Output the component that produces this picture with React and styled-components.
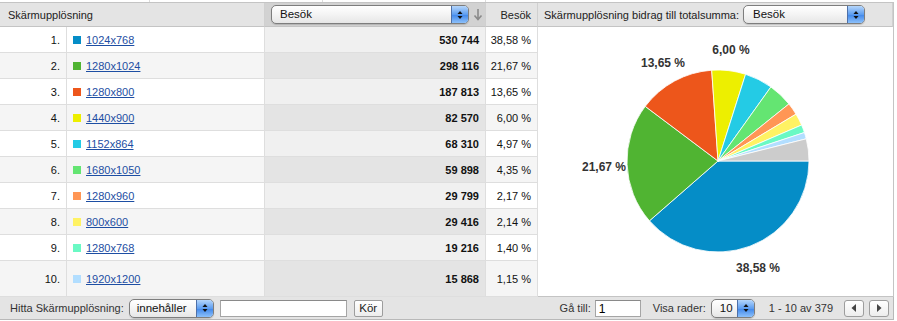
import React from "react"
import styled, { createGlobalStyle } from "styled-components"

const GlobalStyle = createGlobalStyle`
  body {
    margin: 0;
    background: #fff;
    font-family: "Liberation Sans", Arial, sans-serif;
    font-size: 11px;
    color: #222;
  }
`

const rows = [
  { res: "1024x768", visits: "530 744", pct: "38,58 %", color: "#058dc7" },
  { res: "1280x1024", visits: "298 116", pct: "21,67 %", color: "#50b432" },
  { res: "1280x800", visits: "187 813", pct: "13,65 %", color: "#ed561b" },
  { res: "1440x900", visits: "82 570", pct: "6,00 %", color: "#edef00" },
  { res: "1152x864", visits: "68 310", pct: "4,97 %", color: "#24cbe5" },
  { res: "1680x1050", visits: "59 898", pct: "4,35 %", color: "#64e572" },
  { res: "1280x960", visits: "29 799", pct: "2,17 %", color: "#ff9655" },
  { res: "800x600", visits: "29 416", pct: "2,14 %", color: "#fff263" },
  { res: "1280x768", visits: "19 216", pct: "1,40 %", color: "#6af9c4" },
  { res: "1920x1200", visits: "15 868", pct: "1,15 %", color: "#b2deff" },
]

const shares = [38.58, 21.67, 13.65, 6.0, 4.97, 4.35, 2.17, 2.14, 1.4, 1.15]

const Page = styled.div`
  width: 894px;
`

const TopStrip = styled.div`
  height: 2px;
  display: grid;
  grid-template-columns: 150px 173px 163px 1fr;
  border-bottom: 1px solid #c4c4c4;
`

const StripCell = styled.div`
  border-right: 1px solid #dcdcdc;
  &:last-child {
    border-right: none;
  }
`

const Grid = styled.div`
  display: grid;
  grid-template-columns: 67px 198px 221px 52px 1fr;
  grid-template-rows: 24px repeat(9, 26px) 36px;
  border-right: 1px solid #c4c4c4;
`

const HeadCell = styled.div`
  grid-column: span ${(p) => p.$span || 1};
  display: flex;
  align-items: center;
  justify-content: ${(p) => p.$justify || "flex-start"};
  gap: 4px;
  padding: 0 ${(p) => p.$pr || 8}px 0 ${(p) => p.$pl || 8}px;
  background: ${(p) => (p.$sorted ? "#d2d2d2" : "#e4e4e4")};
  border-bottom: 1px solid #c4c4c4;
  border-right: 1px solid #d0d0d0;
  color: #222;
  white-space: nowrap;
  &:last-child {
    border-right: none;
  }
`

const Cell = styled.div`
  display: flex;
  align-items: center;
  justify-content: ${(p) => (p.$right ? "flex-end" : "flex-start")};
  gap: 5px;
  padding: 0 6px;
  background: ${(p) => p.$bg};
  border-bottom: 1px solid #dedede;
  border-right: 1px solid #dedede;
  font-weight: ${(p) => (p.$bold ? "bold" : "normal")};
  color: #111;
  white-space: nowrap;
`

const Swatch = styled.span`
  width: 8px;
  height: 8px;
  background: ${(p) => p.$color};
  flex: none;
`

const ResLink = styled.a`
  color: #1d4ea3;
  text-decoration: underline;
  cursor: pointer;
`

const ChartPanel = styled.div`
  grid-column: 5;
  grid-row: 2 / span 10;
  background: #fff;
  border-bottom: 1px solid #c4c4c4;
`

const SelectBox = styled.div`
  width: ${(p) => p.$w}px;
  height: 19px;
  box-sizing: border-box;
  display: flex;
  border: 1px solid #7d7d7d;
  border-radius: 5px;
  background: linear-gradient(#ffffff, #f4f4f4 50%, #e6e6e6);
  box-shadow: 0 1px 1px rgba(0, 0, 0, 0.15);
  overflow: hidden;
  font-size: 11.5px;
  color: #111;
  flex: none;
`

const SelectValue = styled.span`
  flex: 1;
  padding-left: ${(p) => p.$pl || 8}px;
  line-height: 17px;
  white-space: nowrap;
`

const Stepper = styled.span`
  width: 16px;
  display: flex;
  align-items: center;
  justify-content: center;
  background: linear-gradient(#b5d6fb, #5d9df0 50%, #3f86ea 51%, #8cc0fa);
  border-left: 1px solid #4e70a8;
`

const SortArrow = styled.svg`
  flex: none;
`

const Footer = styled.div`
  height: 22px;
  display: flex;
  align-items: center;
  justify-content: space-between;
  padding: 0 4px 0 10px;
  background: #e4e4e4;
  border-bottom: 1px solid #b8b8b8;
  border-right: 1px solid #b8b8b8;
  color: #333;
  font-size: 11px;
  white-space: nowrap;
`

const Group = styled.div`
  display: flex;
  align-items: center;
  flex: none;
  gap: ${(p) => (p.$gap === undefined ? 5 : p.$gap)}px;
  margin-left: ${(p) => p.$ml || 0}px;
`

const TextInput = styled.div`
  width: ${(p) => p.$w}px;
  height: 17px;
  box-sizing: border-box;
  background: #fff;
  border: 1px solid #a5a5a5;
  border-top-color: #8a8a8a;
  padding-left: 3px;
  line-height: 16px;
  font-size: 12px;
  color: #000;
`

const Button = styled.div`
  height: 17px;
  min-width: ${(p) => p.$w}px;
  box-sizing: border-box;
  display: flex;
  align-items: center;
  justify-content: center;
  border: 1px solid #9d9d9d;
  border-radius: ${(p) => p.$r || 2}px;
  background: linear-gradient(#ffffff, #ededed);
  font-size: 11.5px;
  color: #222;
`

function StepperArrows() {
  return (
    <Stepper>
      <svg width="6" height="10" viewBox="0 0 6 10">
        <path d="M3 1 L5.5 4 L0.5 4 Z" fill="#111" />
        <path d="M3 9 L5.5 6 L0.5 6 Z" fill="#111" />
      </svg>
    </Stepper>
  )
}

function Select({ width, value, pl }) {
  return (
    <SelectBox $w={width}>
      <SelectValue $pl={pl}>{value}</SelectValue>
      <StepperArrows />
    </SelectBox>
  )
}

function Pie() {
  const cx = 180
  const cy = 134
  const r = 91
  const rest = 100 - shares.reduce((s, v) => s + v, 0)
  const parts = [...rows.map((row, i) => ({ v: shares[i], c: row.color })), { v: rest, c: "#cccccc" }]
  let a = 0
  const paths = parts.map((p, i) => {
    const start = a
    const end = a + (p.v / 100) * Math.PI * 2
    a = end
    const x1 = cx + r * Math.cos(start)
    const y1 = cy + r * Math.sin(start)
    const x2 = cx + r * Math.cos(end)
    const y2 = cy + r * Math.sin(end)
    const large = end - start > Math.PI ? 1 : 0
    return (
      <path
        key={i}
        d={`M${cx} ${cy} L${x1} ${y1} A${r} ${r} 0 ${large} 1 ${x2} ${y2} Z`}
        fill={p.c}
        stroke="#fff"
        strokeWidth="0.8"
      />
    )
  })
  const labels = [
    { t: "38,58 %", x: 220, y: 245 },
    { t: "21,67 %", x: 66, y: 144 },
    { t: "13,65 %", x: 125, y: 40 },
    { t: "6,00 %", x: 193, y: 27 },
  ]
  return (
    <svg width="355" height="269" viewBox="0 0 355 269">
      {paths}
      {labels.map((l) => (
        <text
          key={l.t}
          x={l.x}
          y={l.y}
          textAnchor="middle"
          fontFamily="Liberation Sans, Arial, sans-serif"
          fontWeight="bold"
          fontSize="12"
          fill="#333"
        >
          {l.t}
        </text>
      ))}
    </svg>
  )
}

export default function App() {
  return (
    <Page>
      <GlobalStyle />
      <TopStrip>
        <StripCell />
        <StripCell />
        <StripCell />
        <StripCell />
      </TopStrip>
      <Grid>
        <HeadCell $span={2}>Skärmupplösning</HeadCell>
        <HeadCell $sorted $pl={6} $pr={4}>
          <Select width={198} value="Besök" />
          <SortArrow width="10" height="13" viewBox="0 0 10 13">
            <path d="M5 1 V11 M1.5 7.5 L5 11.5 L8.5 7.5" stroke="#8a8a8a" strokeWidth="1.6" fill="none" />
          </SortArrow>
        </HeadCell>
        <HeadCell $justify="flex-end" $pr={6}>
          Besök
        </HeadCell>
        <HeadCell $pl={6}>
          Skärmupplösning bidrag till totalsumma:
          <Select width={122} value="Besök" pl={9} />
        </HeadCell>
        {rows.map((row, i) => {
          const even = i % 2 === 1
          const base = even ? "#f5f5f5" : "#ffffff"
          const sorted = even ? "#e4e4e4" : "#f0f0f0"
          return (
            <React.Fragment key={row.res}>
              <Cell $right $bg={base}>
                {i + 1}.
              </Cell>
              <Cell $bg={base}>
                <Swatch $color={row.color} />
                <ResLink>{row.res}</ResLink>
              </Cell>
              <Cell $right $bold $bg={sorted}>
                {row.visits}
              </Cell>
              <Cell $right $bg={base}>
                {row.pct}
              </Cell>
              {i === 0 && (
                <ChartPanel>
                  <Pie />
                </ChartPanel>
              )}
            </React.Fragment>
          )
        })}
      </Grid>
      <Footer>
        <Group $gap={6}>
          <Group $gap={5}>
            Hitta Skärmupplösning:
            <Select width={85} value="innehåller" pl={7} />
          </Group>
          <Group $gap={7}>
            <TextInput $w={127} />
            <Button $w={29}>Kör</Button>
          </Group>
        </Group>
        <Group $gap={0}>
          <Group $gap={4}>
            Gå till:
            <TextInput $w={46}>1</TextInput>
          </Group>
          <Group $ml={12} $gap={5}>
            Visa rader:
            <Select width={44} value="10" pl={8} />
          </Group>
          <Group $ml={14} $gap={11}>
            1 - 10 av 379
            <Group $gap={5}>
              <Button $w={20} $r={3}>
                <svg width="6" height="8" viewBox="0 0 6 8">
                  <path d="M5 0 L5 8 L0.5 4 Z" fill="#444" />
                </svg>
              </Button>
              <Button $w={20} $r={3}>
                <svg width="6" height="8" viewBox="0 0 6 8">
                  <path d="M1 0 L1 8 L5.5 4 Z" fill="#444" />
                </svg>
              </Button>
            </Group>
          </Group>
        </Group>
      </Footer>
    </Page>
  )
}
